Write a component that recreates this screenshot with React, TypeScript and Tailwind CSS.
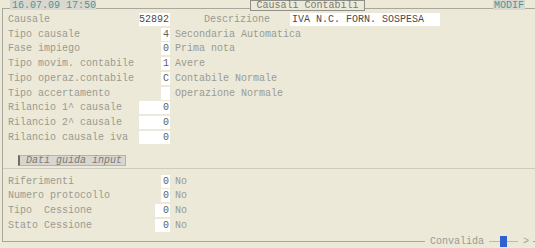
import React from 'react';

const Field: React.FC<{ value?: string; width: string; dark?: boolean }> = ({ value, width, dark }) => (
  <div className={`h-[13px] bg-white text-right pr-[1px] leading-[13px] ${width} ${dark ? 'text-[#4a4a4a]' : 'text-[#606060]'}`}>
    {value}
  </div>
);

const Row: React.FC<{ label: string; value?: string; width: string; note?: string }> = ({ label, value, width, note }) => (
  <div className="flex items-center h-[14.75px]">
    <div className="w-[136px] shrink-0 pl-[5px] whitespace-pre">{label}</div>
    <div className="w-[31px] shrink-0 flex justify-end">
      <Field value={value} width={width} />
    </div>
    {note && <div className="pl-[5px]">{note}</div>}
  </div>
);

export default function App() {
  return (
    <div
      className="relative w-[535px] h-[248px] bg-[#ece9d8] text-[#9a9a92] text-[10px] overflow-hidden"
      style={{ fontFamily: '"Liberation Mono", "DejaVu Sans Mono", monospace' }}
    >
      {/* header strip */}
      <div className="relative z-10 flex h-[10px] leading-[11px]">
        <div className="ml-[10px] w-[86px] h-[10px] bg-[#d9d7cf] text-[#3f9c9c] pl-[2px]">16.07.09 17:50</div>
        <div className="ml-[154px] w-[115px] h-[11px] bg-[#ece9d8] border border-[#8f8f88] text-center text-[#7a7a74] leading-[10px]">
          Causali Contabili
        </div>
        <div className="ml-[128px] w-[32px] h-[10px] bg-[#d9d7cf] text-[#3f9c9c] text-center">MODIF</div>
      </div>

      {/* main frame */}
      <div className="-mt-[2px] ml-[2px] h-[234px] border-l border-t border-b border-[#a9a79c] flex flex-col">
        <div className="pt-[3px]">
          <div className="flex items-center h-[14.75px]">
            <div className="w-[136px] shrink-0 pl-[5px]">Causale</div>
            <Field value="52892" width="w-[31px]" dark />
            <div className="pl-[34px] w-[120px] shrink-0">Descrizione</div>
            <div className="w-[150px] h-[13px] bg-white text-[#4a4a4a] pl-[2px] leading-[13px]">IVA N.C. FORN. SOSPESA</div>
          </div>
          <Row label="Tipo causale" value="4" width="w-[9px]" note="Secondaria Automatica" />
          <Row label="Fase impiego" value="0" width="w-[9px]" note="Prima nota" />
          <Row label="Tipo movim. contabile" value="1" width="w-[9px]" note="Avere" />
          <Row label="Tipo operaz.contabile" value="C" width="w-[9px]" note="Contabile Normale" />
          <Row label="Tipo accertamento" width="w-[9px]" note="Operazione Normale" />
          <Row label="Rilancio 1^ causale" value="0" width="w-[31px]" />
          <Row label="Rilancio 2^ causale" value="0" width="w-[31px]" />
          <Row label="Rilancio causale iva" value="0" width="w-[31px]" />
        </div>

        {/* section */}
        <div className="mt-[11px] flex items-end border-b border-[#cfccbf] h-[13px]">
          <div className="ml-[15px] mb-[2px] w-[108px] h-[11px] bg-[#d8d6ce] border border-[#b5b3aa] border-l-2 border-l-[#6e6e68] italic text-[#7a7a74] pl-[6px] leading-[9px]">
            Dati guida input
          </div>
        </div>
        <div className="pt-[5px]">
          <Row label="Riferimenti" value="0" width="w-[9px]" note="No" />
          <Row label="Numero protocollo" value="0" width="w-[9px]" note="No" />
          <Row label="Tipo  Cessione" value="0" width="w-[15px]" note="No" />
          <Row label="Stato Cessione" value="0" width="w-[15px]" note="No" />
        </div>
      </div>

      {/* footer: convalida control over the bottom rule */}
      <div className="absolute left-[425px] top-[235px] flex items-center h-[12px] bg-[#ece9d8] pr-[4px]">
        <div className="pl-[5px]">Convalida</div>
        <div className="ml-[5px] w-[11px] h-[1px] bg-[#bdbbb0] self-end mb-[5px]"></div>
        <div className="w-[7px] h-[11px] bg-[#2f62cf]"></div>
        <div className="w-[11px] h-[1px] bg-[#bdbbb0] self-end mb-[5px]"></div>
        <div className="ml-[5px] text-[#a0a098]">&gt;</div>
      </div>
    </div>
  );
}
